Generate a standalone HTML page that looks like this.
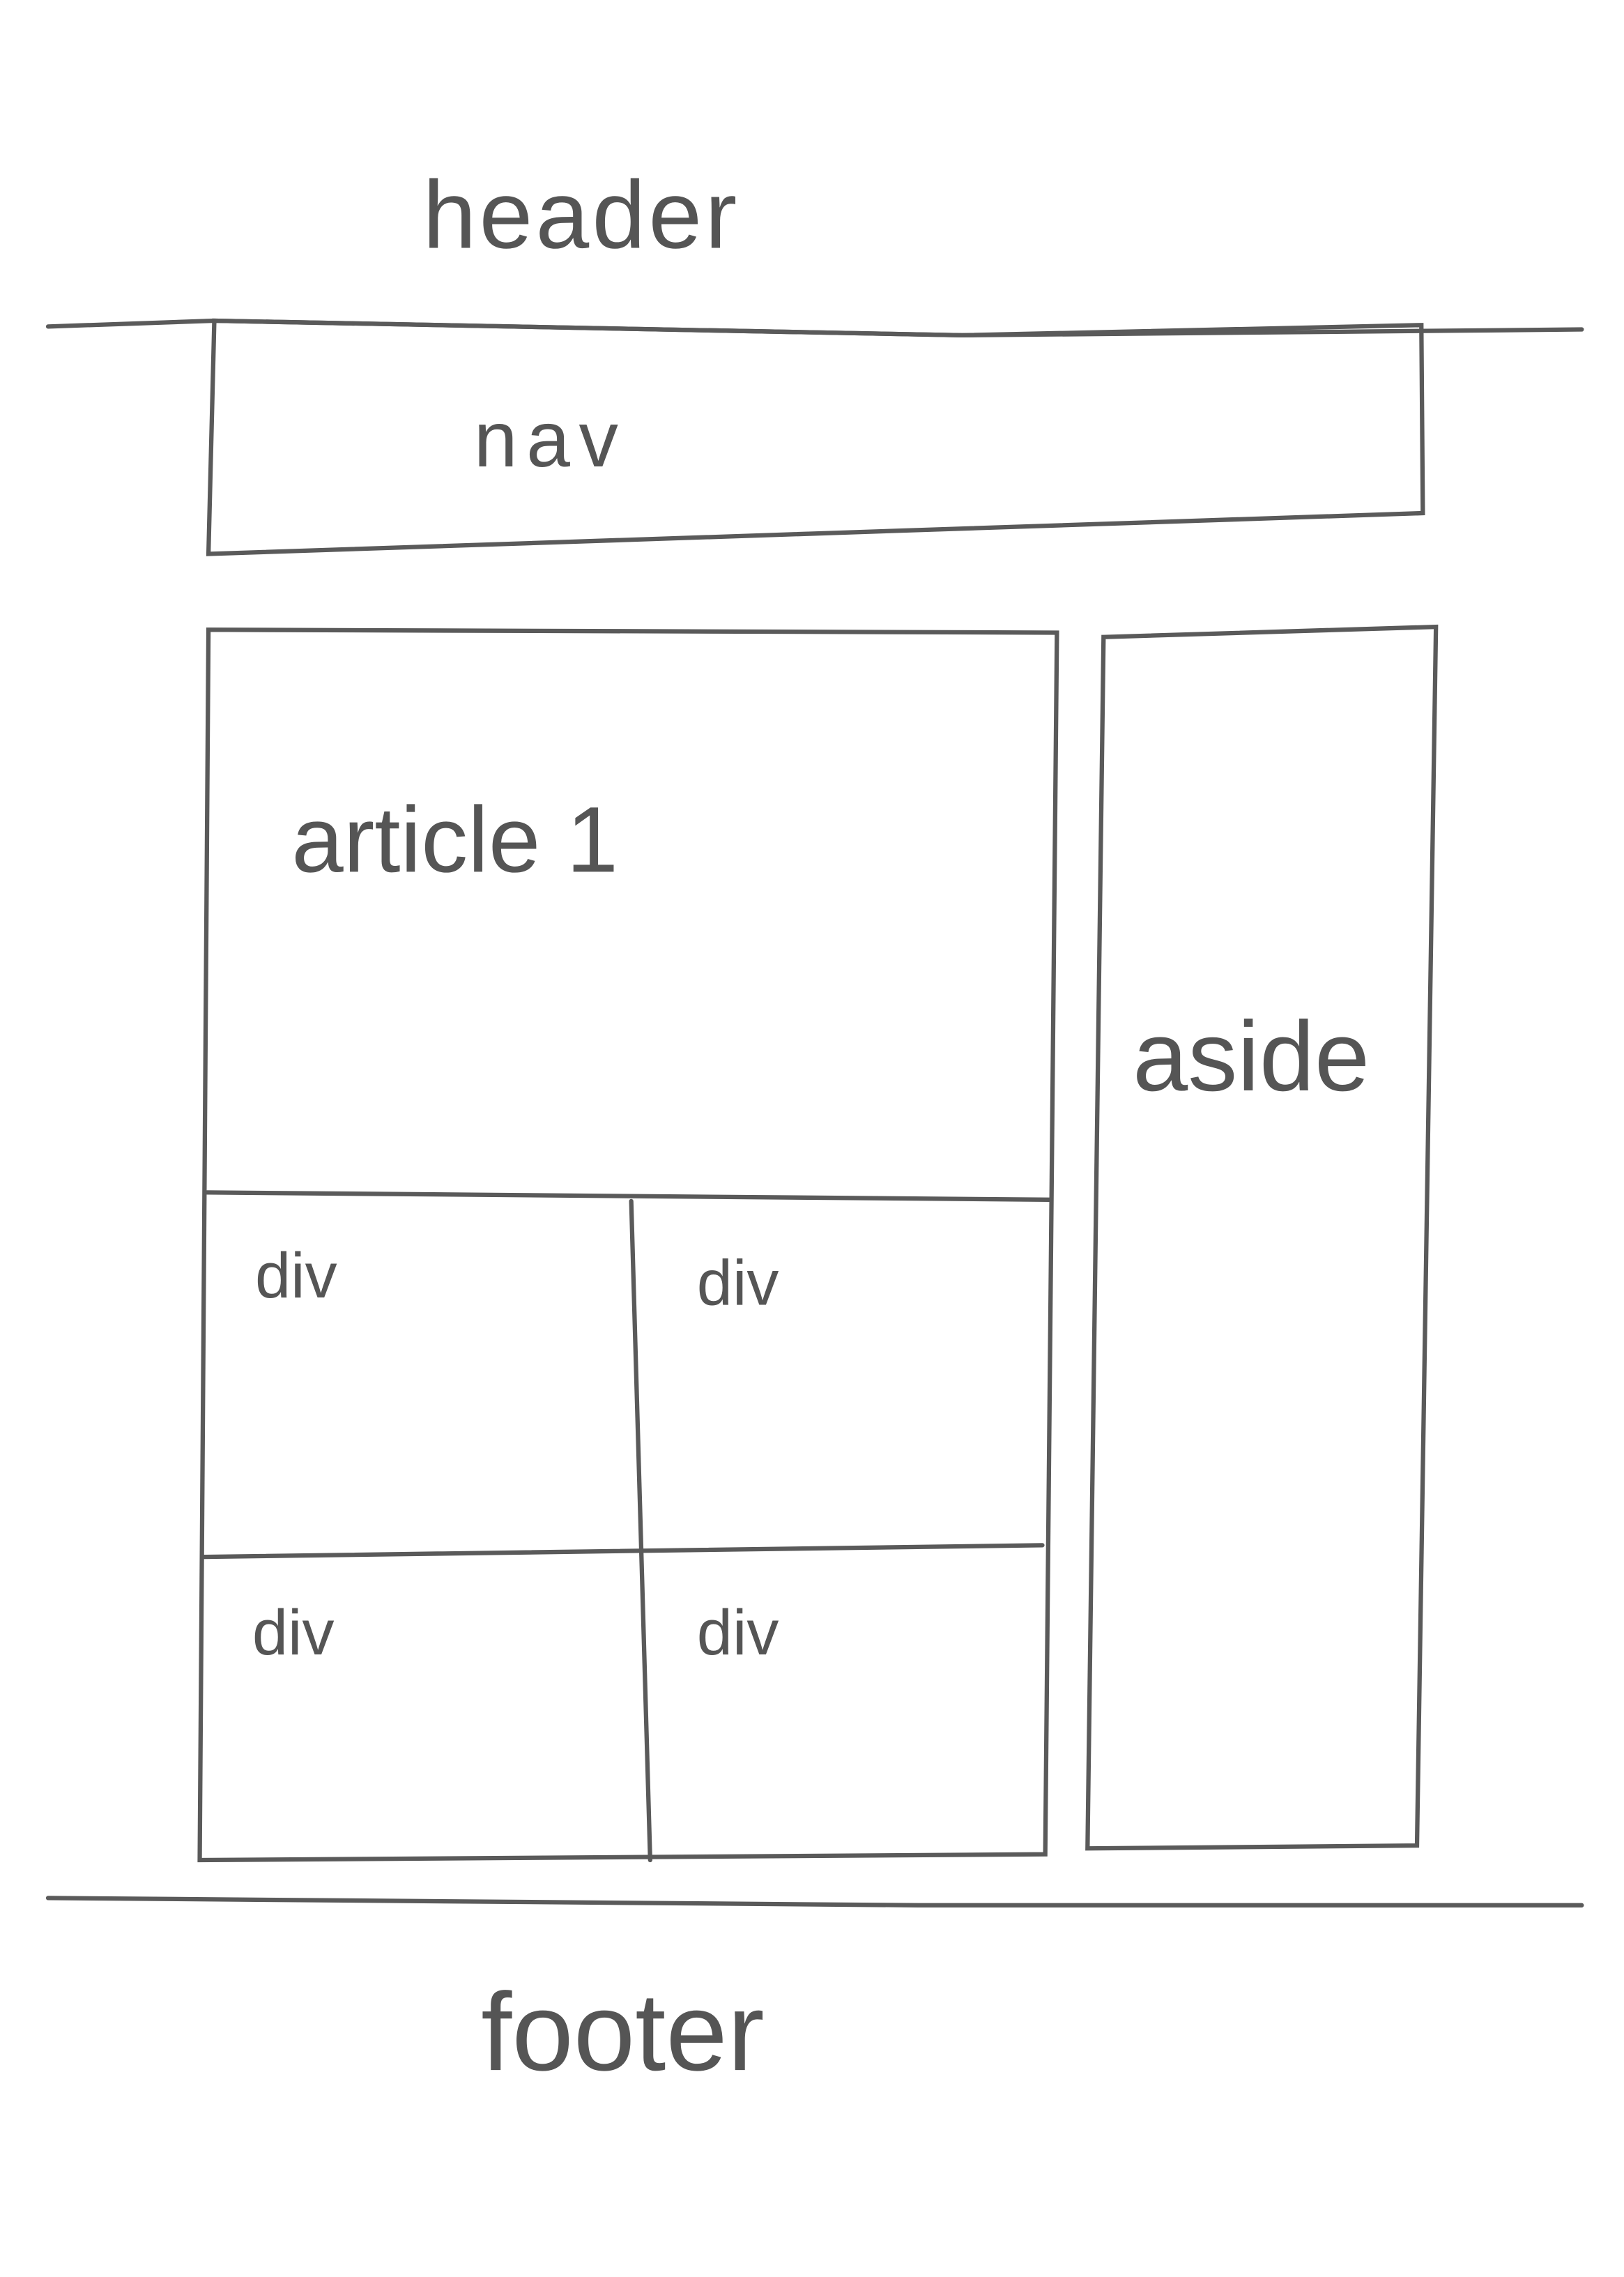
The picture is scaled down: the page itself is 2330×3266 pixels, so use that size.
<!DOCTYPE html>
<html><head><meta charset="utf-8"><style>
html,body{margin:0;padding:0;background:#fff;width:2330px;height:3266px;overflow:hidden}
svg{display:block}
text{font-family:"Liberation Sans",sans-serif;fill:#555;}
</style></head><body>
<svg width="2330" height="3266" viewBox="0 0 1114 1562" preserveAspectRatio="none">
<g fill="none" stroke="#5a5a5a" stroke-width="3" stroke-linecap="round">
<path d="M33 224 L147 220 L660 230 L1085 226"/>
<path d="M147 220 L660 230 L975 223 L976 352 L143 380 Z"/>
<path d="M143 432 L725 434 L717 1272 L137 1276 Z"/>
<path d="M142 818 L720 823"/>
<path d="M140 1068 L715 1060"/>
<path d="M433 824 L446 1276"/>
<path d="M757 437 L985 430 L972 1266 L746 1268 Z"/>
<path d="M33 1302 L630 1307 L1085 1307"/>
</g>
<text x="290" y="170" font-size="66" letter-spacing="2">header</text>
<text x="325" y="320" font-size="54" letter-spacing="6">nav</text>
<text x="200" y="598" font-size="64">article 1</text>
<text x="777" y="748" font-size="68">aside</text>
<text x="175" y="890" font-size="44">div</text>
<text x="478" y="895" font-size="44">div</text>
<text x="173" y="1135" font-size="44">div</text>
<text x="478" y="1135" font-size="44">div</text>
<text x="330" y="1420" font-size="76">footer</text>
</svg>
</body></html>
